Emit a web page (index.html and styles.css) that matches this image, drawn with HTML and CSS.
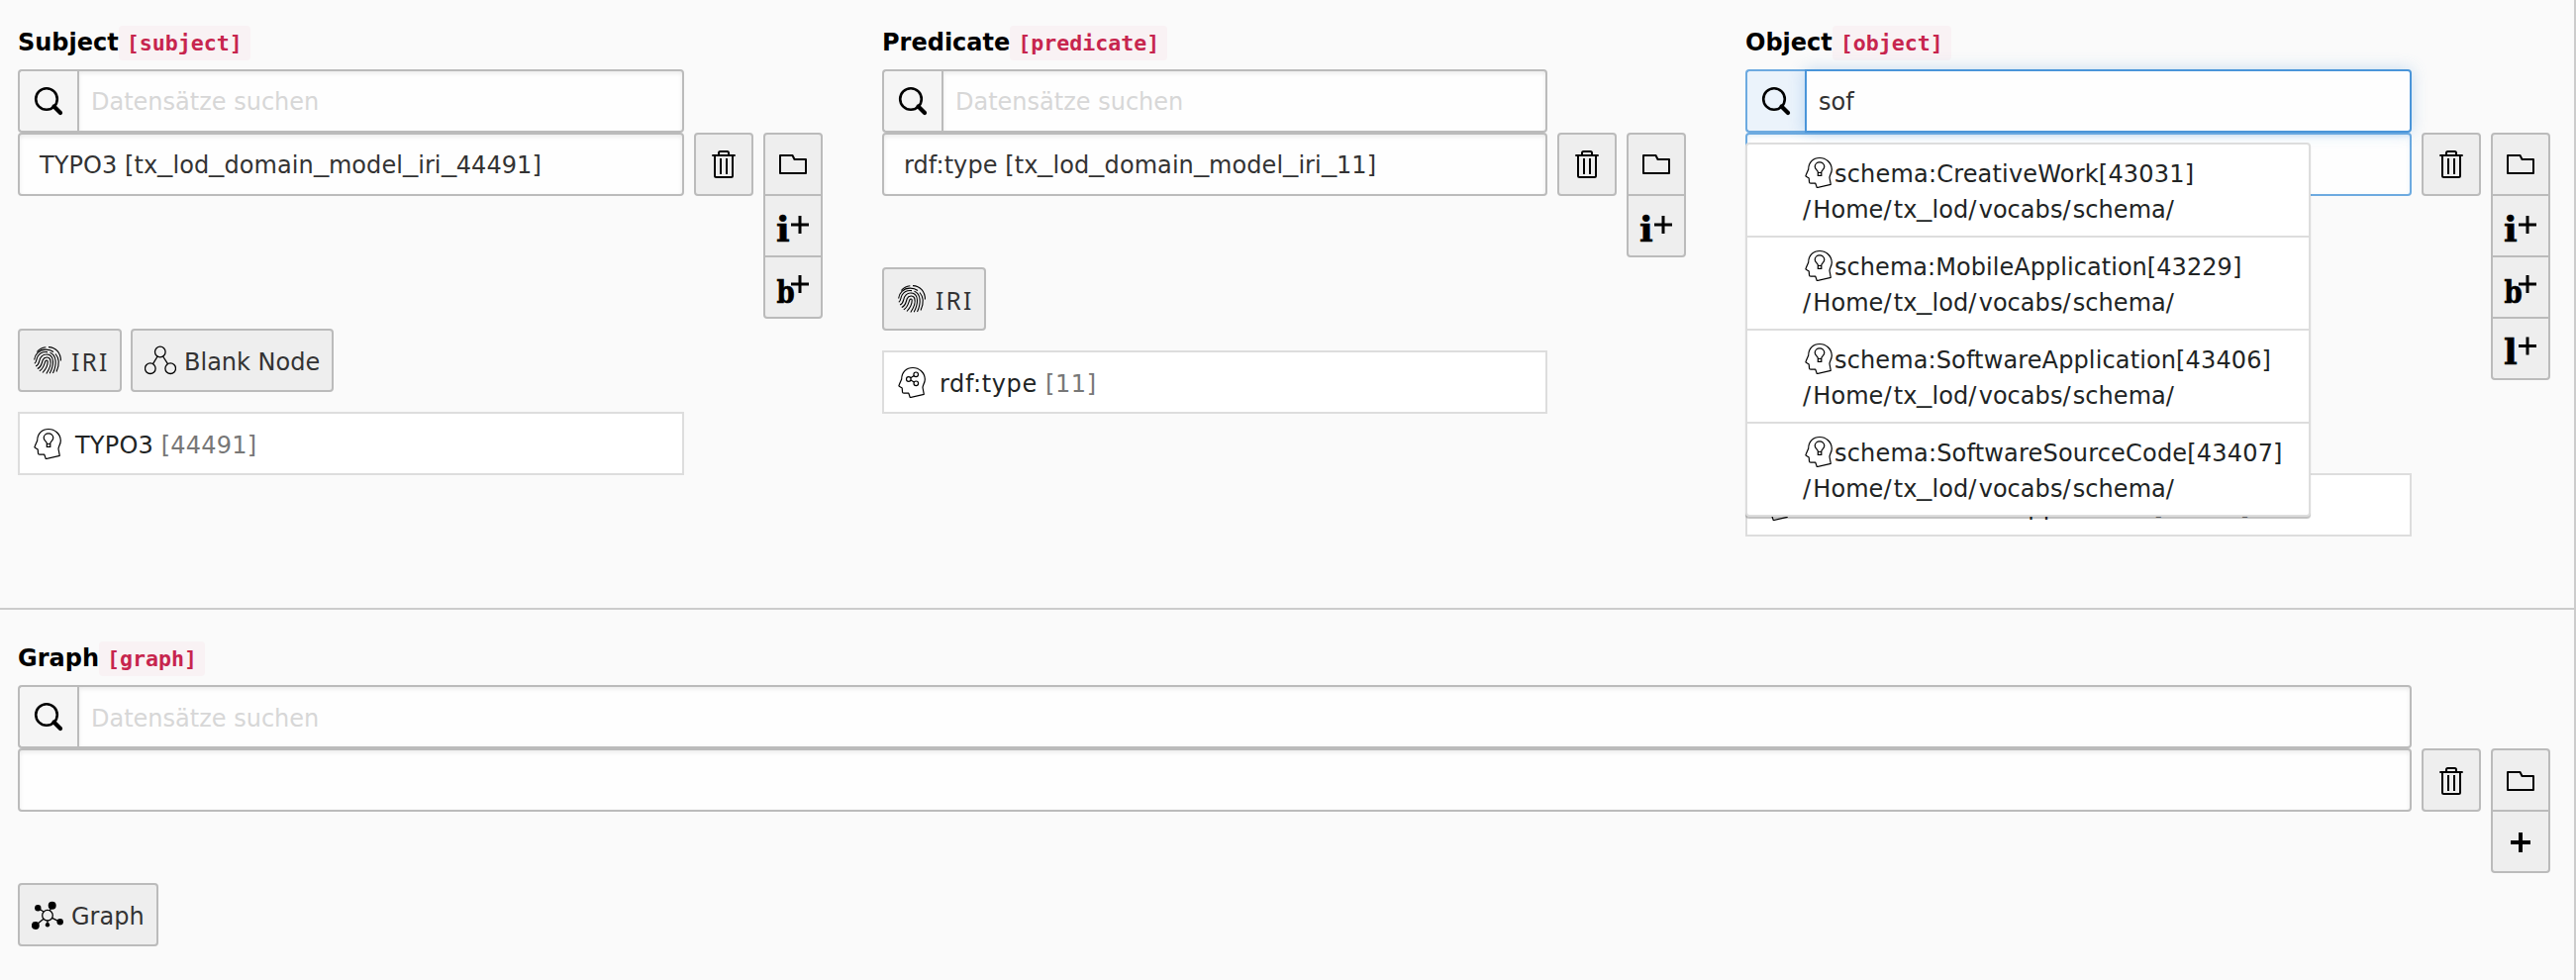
FILE: index.html
```html
<!DOCTYPE html>
<html lang="de">
<head>
<meta charset="utf-8">
<title>Statement</title>
<link rel="stylesheet" href="styles.css">
</head>
<body>
<svg class="defs" width="0" height="0">
  <symbol id="search" viewBox="0 0 32 32"><circle cx="14" cy="14" r="10.8" fill="none" stroke="#000" stroke-width="2.6"/><path d="M21.5 21.5l6.5 6.5" fill="none" stroke="#000" stroke-width="4.2" stroke-linecap="round"/></symbol>
  <symbol id="trash" viewBox="0 0 32 32"><path d="M4.3 7h23.4M11 7V4.500q0-1.500 1.500-1.500h7q1.500 0 1.500 1.500V7M7 7v20.500q0 1.500 1.500 1.500h15q1.500 0 1.500-1.500V7M13 10v16M19 10v16" fill="none" stroke="#000" stroke-width="2"/></symbol>
  <symbol id="folder" viewBox="0 0 32 32"><path d="M3 7h12.500l2 4H29v14H3z" fill="none" stroke="#000" stroke-width="2" stroke-linejoin="round"/></symbol>
  <symbol id="plus" viewBox="0 0 32 32"><path d="M16 6v20M6 16h20" fill="none" stroke="#000" stroke-width="4"/></symbol>
  <symbol id="head" viewBox="0 0 32 32"><path d="M5.700 13C5.700 6 10.500 1.500 17 1.500S29 6.300 29.300 13c.1 3.500-2.300 6-2.300 8.500l1.300 6.800L14.300 31.600l-1.500-4.400H8q-1.500 0-1.500-1.500L6.200 22 3.300 20.300q-.6-.6-.2-1.300z" fill="none" stroke="#000" stroke-width="1.200" stroke-linejoin="round"/></symbol>
  <symbol id="idea" viewBox="0 0 32 32"><use href="#head"/><path d="M15.300 19.300v-3.500c0-1.500-3.100-2.700-3.100-5.500a4.800 4.500 0 0 1 9.600 0c0 2.800-3 4-3 5.500v3.500zM15.300 16.500h3.500" fill="none" stroke="#000" stroke-width="1.200"/></symbol>
  <symbol id="share" viewBox="0 0 32 32"><use href="#head"/><g fill="none" stroke="#000" stroke-width="1.200"><circle cx="20.200" cy="8.300" r="2.300"/><circle cx="12.800" cy="13" r="2.300"/><circle cx="20.300" cy="17.300" r="2.300"/><path d="M14.800 11.800l3.500-2.300M14.900 14.100l3.400 2"/></g></symbol>
  <symbol id="blank" viewBox="0 0 32 32"><g fill="none" stroke="#000" stroke-width="1.300"><circle cx="15.800" cy="7.500" r="5.300"/><circle cx="5.800" cy="24.200" r="5.300"/><circle cx="26.200" cy="24.200" r="5.300"/><path d="M13.100 12l-4.600 7.700M18.600 12l4.900 7.700"/></g></symbol>
  <symbol id="graph" viewBox="0 0 32 32"><circle cx="16" cy="16.700" r="5.300" fill="none" stroke="#000" stroke-width="1.300"/><path d="M12 13L6.300 9.300M18.300 12l2.400-5.300M12 20.300L3.700 27M20.700 19.300l8 4M16 22v4" stroke="#000" stroke-width="1.300"/><circle cx="6.300" cy="9.300" r="3.200"/><circle cx="20.700" cy="6.700" r="4"/><circle cx="3.800" cy="27" r="4"/><circle cx="28.700" cy="23.300" r="3.200"/><circle cx="16" cy="26.200" r="2.200"/></symbol>
  <symbol id="finger" viewBox="0 0 32 32"><g fill="none" stroke="#000" stroke-width="1.100"><path d="M5.300 7.500A14 13.500 0 0 1 14.300 2.700M17 2.600C24.500 2.800 29.500 8.500 29.400 16.500"/><path d="M2.600 15.500C3 10 7.500 5.200 14 5.100c3.300-.1 6 .8 8 2.400M24 9.500c4 4.500 4 11.500 1 18"/><path d="M2.800 19.200c2.500-1.500 1.500-4.500 3.500-7.500 2.200-3.300 6-4.600 9.700-4.100M18.500 8.300c6.500 2.500 7.300 11.500 3 20.700"/><path d="M4.100 22c3.800-1.500 3.200-5 4.500-8 1.700-3.300 5.400-4.700 8.600-3.700 5.500 2 5.600 10 1 19"/><path d="M5.800 24.500c4.200-1.700 4.200-5.500 5.400-8.700 1.500-3.500 6.400-3.800 7.600-.3 1.200 4-1 9.500-4 14"/><path d="M7.800 26.900c4.200-2.500 4.700-6.700 6-9.900.7-1.500 2.300-1.300 2.400.2.100 4-2.200 8-5.200 11.300"/></g></symbol>
</svg>
<main class="form">
  <section class="section triple">
    <div class="field">
      <label class="label">Subject<code class="code">[subject]</code></label>
      <div class="search"><span class="addon"><svg class="icon"><use href="#search"/></svg></span><span class="query hint">Datensätze suchen</span></div>
      <div class="row">
        <div class="value">TYPO3 [tx<i class="us">_</i>lod<i class="us">_</i>domain<i class="us">_</i>model<i class="us">_</i>iri<i class="us">_</i>44491]</div>
        <div class="btn"><svg class="icon"><use href="#trash"/></svg></div>
        <div class="stack">
          <div class="btn"><svg class="icon"><use href="#folder"/></svg></div>
          <div class="btn"><svg class="icon" viewBox="0 0 32 32"><text class="slab" x="-1" y="32" font-size="36">i</text><path class="sup" d="M23 6v18M14 15h18"/></svg></div>
          <div class="btn"><svg class="icon" viewBox="0 0 32 32"><text class="slab" transform="translate(-.5 31.500) scale(.84 1)" font-size="31">b</text><path class="sup" d="M23 4v18M14 13h18"/></svg></div>
        </div>
      </div>
      <div class="types"><div class="btn wide"><svg class="icon"><use href="#finger"/></svg><span class="iri">IRI</span></div><div class="btn wide"><svg class="icon"><use href="#blank"/></svg><span>Blank Node</span></div></div>
      <div class="result"><svg class="icon"><use href="#idea"/></svg><span>TYPO3 <span class="uid">[44491]</span></span></div>
    </div>
    <div class="field">
      <label class="label">Predicate<code class="code">[predicate]</code></label>
      <div class="search"><span class="addon"><svg class="icon"><use href="#search"/></svg></span><span class="query hint">Datensätze suchen</span></div>
      <div class="row">
        <div class="value">rdf:type [tx<i class="us">_</i>lod<i class="us">_</i>domain<i class="us">_</i>model<i class="us">_</i>iri<i class="us">_</i>11]</div>
        <div class="btn"><svg class="icon"><use href="#trash"/></svg></div>
        <div class="stack">
          <div class="btn"><svg class="icon"><use href="#folder"/></svg></div>
          <div class="btn"><svg class="icon" viewBox="0 0 32 32"><text class="slab" x="-1" y="32" font-size="36">i</text><path class="sup" d="M23 6v18M14 15h18"/></svg></div>
        </div>
      </div>
      <div class="types"><div class="btn wide"><svg class="icon"><use href="#finger"/></svg><span class="iri">IRI</span></div></div>
      <div class="result loose"><svg class="icon"><use href="#share"/></svg><span>rdf:type <span class="uid">[11]</span></span></div>
    </div>
    <div class="field active">
      <label class="label">Object<code class="code">[object]</code></label>
      <div class="search"><span class="addon"><svg class="icon"><use href="#search"/></svg></span><span class="query">sof</span></div>
      <div class="row">
        <div class="value"></div>
        <div class="btn"><svg class="icon"><use href="#trash"/></svg></div>
        <div class="stack">
          <div class="btn"><svg class="icon"><use href="#folder"/></svg></div>
          <div class="btn"><svg class="icon" viewBox="0 0 32 32"><text class="slab" x="-1" y="32" font-size="36">i</text><path class="sup" d="M23 6v18M14 15h18"/></svg></div>
          <div class="btn"><svg class="icon" viewBox="0 0 32 32"><text class="slab" transform="translate(-.5 31.500) scale(.84 1)" font-size="31">b</text><path class="sup" d="M23 4v18M14 13h18"/></svg></div>
          <div class="btn"><svg class="icon" viewBox="0 0 32 32"><text class="slab" x="-1" y="31.500" font-size="36">l</text><path class="sup" d="M23 4.500v18M14 13.500h18"/></svg></div>
        </div>
      </div>
      <div class="types tall"></div>
      <div class="result"><svg class="icon"><use href="#idea"/></svg><span>schema:SoftwareApplication <span class="uid">[43406]</span></span></div>
      <ul class="menu">
        <li class="item"><div class="line wider"><svg class="icon"><use href="#idea"/></svg><span>schema:CreativeWork[43031]</span></div><div class="line"><span><b class="sl">/</b>Home<b class="sl">/</b>tx<i class="us">_</i>lod<b class="sl">/</b>vocabs<b class="sl">/</b>schema<b class="sl">/</b></span></div></li>
        <li class="item"><div class="line"><svg class="icon"><use href="#idea"/></svg><span>schema:MobileApplication[43229]</span></div><div class="line"><span><b class="sl">/</b>Home<b class="sl">/</b>tx<i class="us">_</i>lod<b class="sl">/</b>vocabs<b class="sl">/</b>schema<b class="sl">/</b></span></div></li>
        <li class="item"><div class="line wide-text"><svg class="icon"><use href="#idea"/></svg><span>schema:SoftwareApplication[43406]</span></div><div class="line"><span><b class="sl">/</b>Home<b class="sl">/</b>tx<i class="us">_</i>lod<b class="sl">/</b>vocabs<b class="sl">/</b>schema<b class="sl">/</b></span></div></li>
        <li class="item"><div class="line wider"><svg class="icon"><use href="#idea"/></svg><span>schema:SoftwareSourceCode[43407]</span></div><div class="line"><span><b class="sl">/</b>Home<b class="sl">/</b>tx<i class="us">_</i>lod<b class="sl">/</b>vocabs<b class="sl">/</b>schema<b class="sl">/</b></span></div></li>
      </ul>
    </div>
  </section>
  <section class="section single">
    <div class="field">
      <label class="label">Graph<code class="code">[graph]</code></label>
      <div class="search"><span class="addon"><svg class="icon"><use href="#search"/></svg></span><span class="query hint low">Datensätze suchen</span></div>
      <div class="row">
        <div class="value"></div>
        <div class="btn low"><svg class="icon"><use href="#trash"/></svg></div>
        <div class="stack">
          <div class="btn low"><svg class="icon"><use href="#folder"/></svg></div>
          <div class="btn low"><svg class="icon"><use href="#plus"/></svg></div>
        </div>
      </div>
      <div class="types"><div class="btn wide"><svg class="icon"><use href="#graph"/></svg><span>Graph</span></div></div>
    </div>
  </section>
</main>
</body>
</html>
```
FILE: styles.css
```css
* { box-sizing: border-box; }
body {
  margin: 0;
  background: #fafafa;
  color: #333;
  font: 24px/36px "DejaVu Sans", Verdana, sans-serif;
}
.defs { position: absolute; }
.form {
  height: 990px;
  border-right: 2px solid #ccc;
  overflow: hidden;
}
.section { padding: 26px 24px 0 18px; }
.triple {
  display: grid;
  grid-template-columns: 813px 812px 813px;
  column-gap: 60px;
  height: 616px;
  border-bottom: 2px solid #ccc;
}
.single { padding-top: 32px; }
.field { position: relative; }
.label {
  display: flex;
  height: 35px;
  margin-bottom: 9px;
  color: #000;
  font-weight: 700;
  line-height: 35px;
}
.code {
  padding: 0 8px;
  border-radius: 4px;
  background: #f9f2f4;
  color: #c7254e;
  font: 700 21.6px/35px "DejaVu Sans Mono", monospace;
}
.search {
  display: flex;
  height: 64px;
  margin-right: 140px;
}
.addon {
  flex: none;
  width: 60px;
  padding: 14px 0 0 13px;
  border: 2px solid #bbb;
  border-right: 0;
  border-radius: 4px 0 0 4px;
  background: #f5f5f5;
}
.icon {
  display: block;
  flex: none;
  width: 32px;
  height: 32px;
  overflow: visible;
}
.query, .value {
  flex: 1;
  border: 2px solid #bbb;
  background: #fefefe;
  box-shadow: inset 0 2px 4px rgba(0, 0, 0, .08);
}
.query {
  padding: 14px 12px 0;
  border-radius: 0 4px 4px 0;
  line-height: 35px;
}
.hint { color: #d7d7d7; }
.query.low { padding-top: 15px; }
.row {
  display: flex;
  align-items: flex-start;
}
.value {
  height: 64px;
  padding: 13px 20px 0;
  border-radius: 4px;
  letter-spacing: .07px;
}
.us {
  display: inline-block;
  width: 15.2px;
  font-style: normal;
  letter-spacing: 0;
  transform: translateY(-2px) scaleX(1.27);
  transform-origin: 0 50%;
}
.sl {
  font-weight: 400;
  letter-spacing: 2.2px;
}
.btn {
  display: flex;
  align-items: center;
  justify-content: center;
  width: 60px;
  height: 64px;
  margin-left: 10px;
  border: 2px solid #bbb;
  border-radius: 4px;
  background: #eee;
}
.btn.low .icon { margin-top: 2px; }
.stack { margin-left: 10px; }
.stack .btn {
  margin: -2px 0 0;
  border-radius: 0;
}
.stack .btn:first-child {
  margin-top: 0;
  border-radius: 4px 4px 0 0;
}
.stack .btn:last-child { border-radius: 0 0 4px 4px; }
.slab {
  fill: #000;
  stroke: #000;
  stroke-width: .7;
  font-family: "DejaVu Serif", serif;
  font-weight: 700;
}
.sup {
  fill: none;
  stroke: #000;
  stroke-width: 3;
}
.types {
  display: flex;
  gap: 9px;
  margin-top: 10px;
}
.tall { height: 64px; }
.btn.wide {
  gap: 8px;
  width: auto;
  margin: 0;
  padding: 0 12px;
}
.btn.wide > span, .result > span, .line > span { padding-top: 3px; }
.iri {
  width: 37px;
  font-family: "Noto Sans", sans-serif;
  font-size: 24.5px;
  letter-spacing: 2.2px;
}
.result {
  display: flex;
  align-items: center;
  gap: 12px;
  height: 64px;
  margin: 20px 140px 0 0;
  padding-left: 12px;
  border: 2px solid #ddd;
  background: #fff;
  color: #212424;
  letter-spacing: .2px;
}
.loose { letter-spacing: .6px; }
.uid { color: #777; }
.active .addon {
  border-color: #6daae0;
  background: #ebf3fb;
}
.active .query {
  position: relative;
  border-color: #4a95d9;
  box-shadow: 0 0 16px rgba(74, 149, 217, .3);
}
.active .value {
  border-color: #6daae0;
  box-shadow: inset 0 2px 4px rgba(74, 149, 217, .15);
}
.menu {
  position: absolute;
  z-index: 2;
  top: 118px;
  left: 0;
  width: 571px;
  margin: 0;
  padding: 0;
  border: 2px solid #ddd;
  border-radius: 4px;
  background: #fff;
  box-shadow: 0 2px 1px rgba(0, 0, 0, .25);
  color: #212424;
  list-style: none;
}
.item {
  height: 94px;
  padding: 10px 0 0 56px;
  border-bottom: 2px solid #ddd;
}
.item:last-child {
  height: 92px;
  border: 0;
}
.line {
  display: flex;
  align-items: center;
  height: 36px;
  letter-spacing: .05px;
  white-space: nowrap;
}
.wide-text { letter-spacing: .13px; }
.wider { letter-spacing: .19px; }
```
